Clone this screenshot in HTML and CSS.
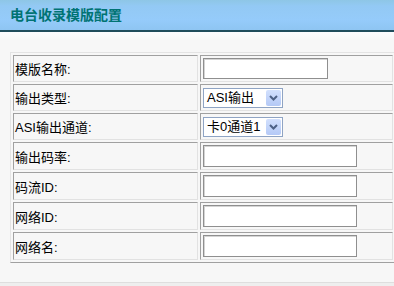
FILE: index.html
```html
<!DOCTYPE html>
<html lang="zh-CN">
<head>
    <meta charset="UTF-8">
    <title>电台收录模版配置</title>
    <link rel="stylesheet" href="styles.css">
</head>
<body>
    <div class="title-bar">
        <h1 class="title">电台收录模版配置</h1>
    </div>

    <div class="content">
        <table class="form-table">
            <tr>
                <td class="label">模版名称:</td>
                <td><input type="text" class="text-input short"></td>
            </tr>
            <tr>
                <td class="label">输出类型:</td>
                <td>
                    <div class="select">
                        <span class="select-text">ASI输出</span>
                        <span class="select-btn">
                            <svg width="9" height="6" viewBox="0 0 9 6"><path d="M1 1l3.5 3.5L8 1" fill="none" stroke="#4d6185" stroke-width="2"/></svg>
                        </span>
                    </div>
                </td>
            </tr>
            <tr>
                <td class="label">ASI输出通道:</td>
                <td>
                    <div class="select">
                        <span class="select-text">卡0通道1</span>
                        <span class="select-btn">
                            <svg width="9" height="6" viewBox="0 0 9 6"><path d="M1 1l3.5 3.5L8 1" fill="none" stroke="#4d6185" stroke-width="2"/></svg>
                        </span>
                    </div>
                </td>
            </tr>
            <tr class="tall">
                <td class="label">输出码率:</td>
                <td><input type="text" class="text-input"></td>
            </tr>
            <tr class="tall">
                <td class="label">码流ID:</td>
                <td><input type="text" class="text-input"></td>
            </tr>
            <tr class="tall">
                <td class="label">网络ID:</td>
                <td><input type="text" class="text-input"></td>
            </tr>
            <tr class="tall">
                <td class="label">网络名:</td>
                <td><input type="text" class="text-input"></td>
            </tr>
        </table>
    </div>

    <div class="footer"></div>
</body>
</html>
```

FILE: styles.css
```css
html, body {
    margin: 0;
    padding: 0;
    overflow: hidden;
}

body {
    width: 394px;
    height: 286px;
    background-color: #f7f7f7;
    font-family: "Liberation Sans", "Noto Sans CJK SC", sans-serif;
    font-size: 13px;
    color: #000;
}

.title-bar {
    height: 32px;
    box-sizing: border-box;
    background: linear-gradient(to bottom, #8ec6e6 0, #93c9f4 6px, #95cbfa 20px, #8ec5f2 30px);
    border-bottom: 2px solid #1f4d5c;
}

.title {
    margin: 0;
    padding: 7px 0 0 10px;
    font-size: 14px;
    line-height: 16px;
    font-weight: bold;
    color: #007373;
}

.content {
    height: 250px;
    box-sizing: border-box;
    padding: 20px 0 0 10px;
    overflow: hidden;
    background: linear-gradient(to bottom, #fbfcfe 0, #f7f7f7 8px);
}

.form-table {
    width: 386px;
    border-collapse: separate;
    border-spacing: 2px;
    border: 1px solid;
    border-color: #e4e4e4 #f7f7f7 #a0a0a0 #e4e4e4;
}

.form-table td {
    height: 25px;
    padding: 0 2px;
    border: 1px solid;
    border-color: #a0a0a0 #e2e2e2 #e2e2e2 #a0a0a0;
    vertical-align: middle;
}

.form-table tr.tall td {
    height: 26px;
}

.form-table td.label {
    width: 180px;
    padding-left: 1px;
}

.text-input {
    display: block;
    width: 154px;
    height: 22px;
    margin: 0;
    padding: 0 2px;
    box-sizing: border-box;
    border: 1px solid #8f8f8f;
    box-shadow: inset 1px 1px 0 #d4d4d4;
    background: #fff;
}

.text-input.short {
    width: 125px;
    height: 21px;
}

.select {
    display: flex;
    align-items: center;
    width: 80px;
    height: 20px;
    box-sizing: border-box;
    border: 1px solid #8fa4c4;
    background: #fff;
}

.select-text {
    flex: 1;
    padding-left: 3px;
    white-space: nowrap;
    line-height: 18px;
}

.select-btn {
    display: flex;
    align-items: center;
    justify-content: center;
    width: 15px;
    height: 16px;
    margin-right: 1px;
    border-radius: 2px;
    background: linear-gradient(to bottom, #d2e0fd, #b4c9f6);
}

.footer {
    height: 4px;
    border-top: 1px solid #dedede;
    background: #eeeeee;
}
```
